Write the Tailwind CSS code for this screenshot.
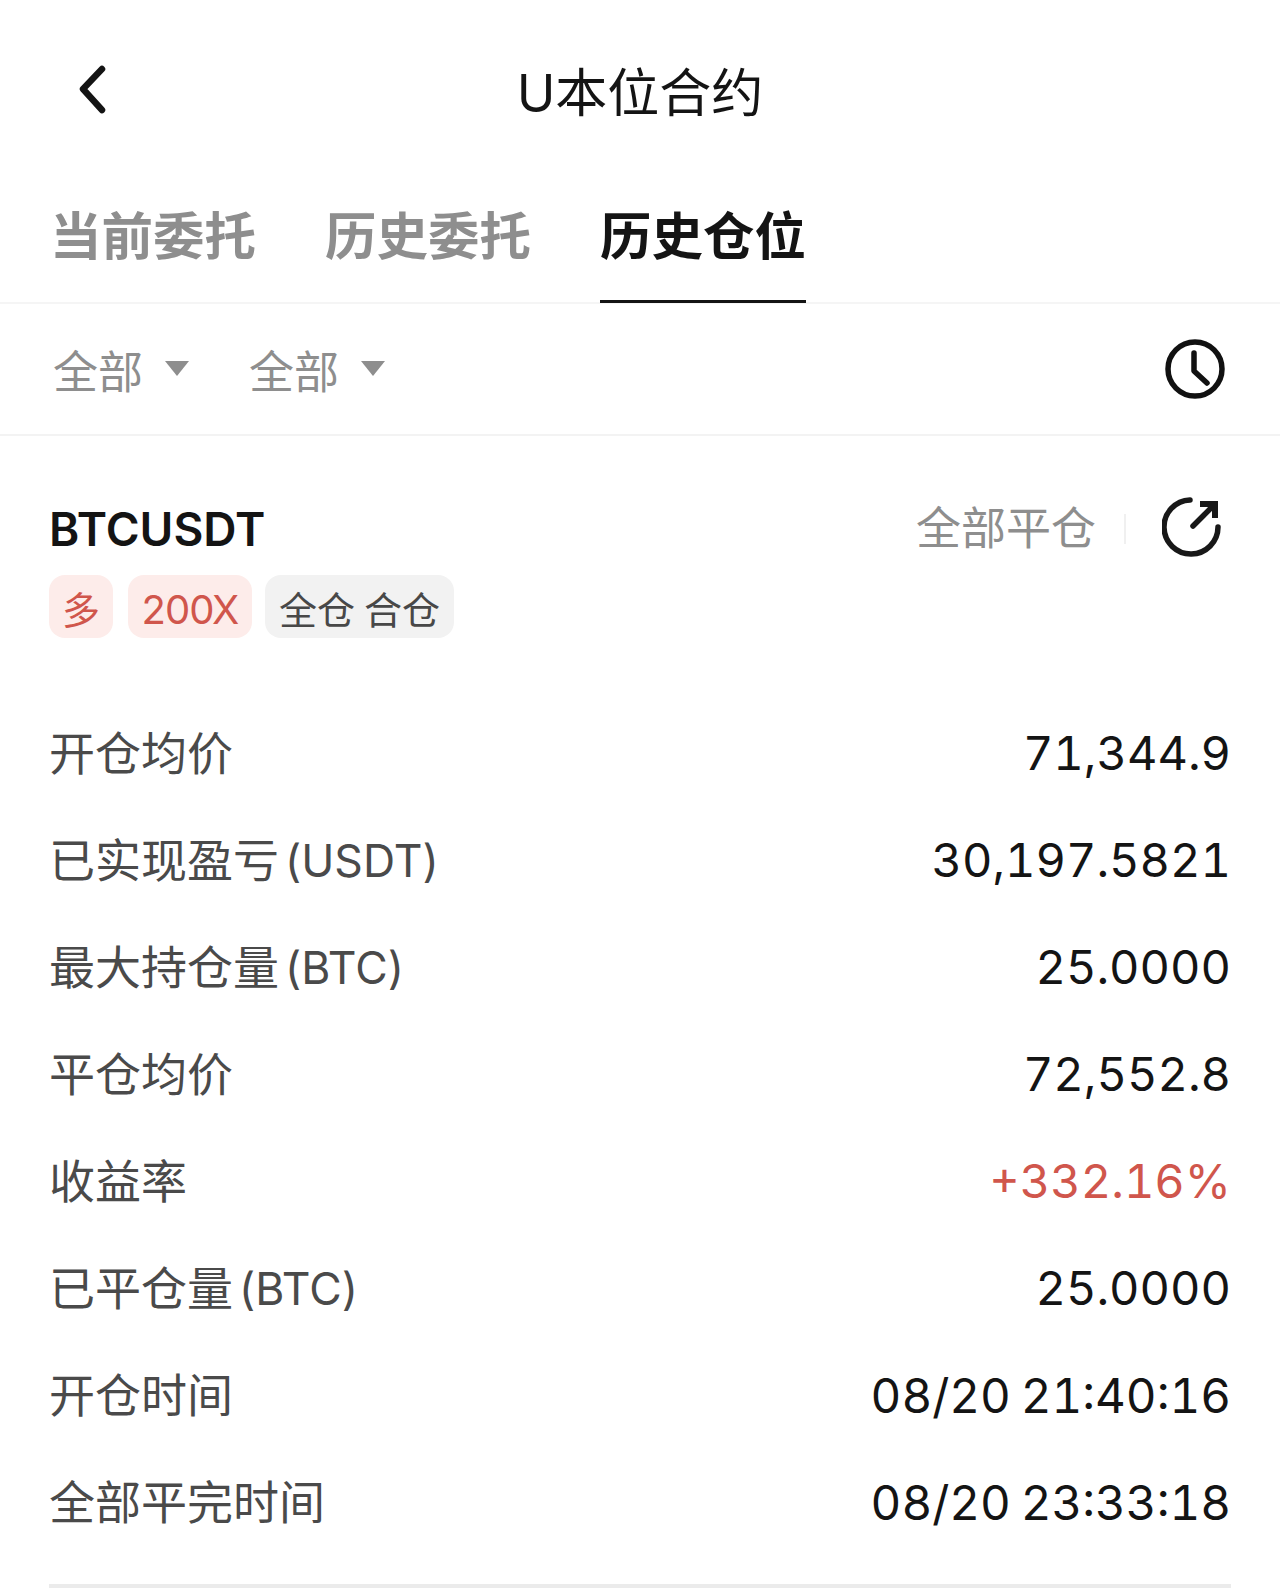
<!DOCTYPE html>
<html lang="zh-CN">
<head>
    <meta charset="UTF-8">
    <meta name="viewport" content="width=device-width, initial-scale=1.0">
    <title>U本位合约</title>
    <script src="https://cdn.jsdelivr.net/npm/@tailwindcss/browser@4"></script>
</head>
<body class="bg-white">
    <div class="w-[1280px] h-[1596px] overflow-hidden bg-white font-['Inter','Noto_Sans_CJK_SC',sans-serif] text-[#141414]">
        <!-- Header -->
        <div class="relative h-[188px] pt-[64px] flex justify-center">
            <svg class="absolute left-[74px] top-[60px]" width="36" height="56" viewBox="0 0 36 56" fill="none" stroke="#141414" stroke-width="6.5" stroke-linecap="round" stroke-linejoin="round"><path d="M28 9 L9 29 L28 50"/></svg>
            <div class="text-[52px] leading-[60px]">U本位合约</div>
        </div>

        <!-- Tabs -->
        <div class="h-[116px] flex gap-[69px] pl-[50px] border-b-2 border-[#f5f5f5] font-bold text-[51.5px] leading-[97px] text-[#8e8e8e]">
            <div>当前委托</div>
            <div>历史委托</div>
            <div class="h-[115px] border-b-[3px] border-[#141414] text-[#141414]">历史仓位</div>
        </div>

        <!-- Filters -->
        <div class="h-[132px] flex items-center pl-[53px] pr-[54px] border-b-2 border-[#f3f3f3] text-[45px] text-[#8e8e8e]">
            <span class="mt-[8px]">全部</span>
            <svg class="ml-[22px] mb-[2px]" width="24" height="15" viewBox="0 0 24 15" fill="#8e8e8e"><path d="M0 0H24L12 15Z"/></svg>
            <span class="ml-[60px] mt-[8px]">全部</span>
            <svg class="ml-[22px] mb-[2px]" width="24" height="15" viewBox="0 0 24 15" fill="#8e8e8e"><path d="M0 0H24L12 15Z"/></svg>
            <svg class="ml-auto mr-[1px]" width="60" height="60" viewBox="0 0 60 60" fill="none" stroke="#111" stroke-width="5.5" stroke-linecap="round" stroke-linejoin="round"><circle cx="30" cy="30" r="27"/><path d="M29 14V32L42 44"/></svg>
        </div>

        <!-- Position card -->
        <div class="px-[49px] pt-[54px]">
            <div class="flex items-center h-[78px]">
                <div class="font-semibold text-[46px]">BTCUSDT</div>
                <div class="ml-auto text-[45px] text-[#8e8e8e]">全部平仓</div>
                <div class="ml-[28px] w-[2px] h-[30px] bg-[#f0f0f0]"></div>
                <svg class="ml-[36px] mr-[9px] mb-[5px]" width="60" height="60" viewBox="0 0 60 60" fill="none" stroke="#181818" stroke-width="5.5" stroke-linecap="round" stroke-linejoin="round"><path d="M28 3A27 27 0 1 0 56 30"/><path d="M31 29L51 9"/><path d="M38 7H53V21" stroke-width="6" stroke-linecap="butt" stroke-linejoin="miter"/></svg>
            </div>
            <div class="flex gap-[15px] mt-[7px] text-[38px] leading-[70px]">
                <div class="w-[64px] h-[63px] rounded-[16px] bg-[#fdecea] text-[#d0564c] text-center">多</div>
                <div class="w-[124px] h-[63px] rounded-[16px] bg-[#fdecea] text-[#d0564c] text-center text-[40px] tracking-[-1px]">200X</div>
                <div class="w-[189px] h-[63px] rounded-[16px] bg-[#f2f2f2] text-[#484848] text-center -ml-[2px] flex justify-center gap-[9px]"><span>全仓</span><span>合仓</span></div>
            </div>

            <!-- Rows -->
            <div class="mt-[62px] text-[46px] text-[#4a4a4a]">
                <div class="h-[107px] flex items-center justify-between"><span>开仓均价</span><span class="text-[47px] tabular-nums text-[#141414]">71,344.9</span></div>
                <div class="h-[107px] flex items-center justify-between"><span>已实现盈亏<span class="ml-[6px] text-[44.5px]">(USDT)</span></span><span class="text-[47px] tabular-nums text-[#141414]">30,197.5821</span></div>
                <div class="h-[107px] flex items-center justify-between"><span>最大持仓量<span class="ml-[6px] text-[44.5px]">(BTC)</span></span><span class="text-[47px] tabular-nums text-[#141414]">25.0000</span></div>
                <div class="h-[107px] flex items-center justify-between"><span>平仓均价</span><span class="text-[47px] tabular-nums text-[#141414]">72,552.8</span></div>
                <div class="h-[107px] flex items-center justify-between"><span>收益率</span><span class="text-[47px] tabular-nums text-[#d0564c]">+332.16%</span></div>
                <div class="h-[107px] flex items-center justify-between"><span>已平仓量<span class="ml-[6px] text-[44.5px]">(BTC)</span></span><span class="text-[47px] tabular-nums text-[#141414]">25.0000</span></div>
                <div class="h-[107px] flex items-center justify-between"><span>开仓时间</span><span class="text-[47.5px] tabular-nums [word-spacing:-3px] text-[#141414]">08/20 21:40:16</span></div>
                <div class="h-[107px] flex items-center justify-between"><span>全部平完时间</span><span class="text-[47.5px] tabular-nums [word-spacing:-3px] text-[#141414]">08/20 23:33:18</span></div>
            </div>
            <div class="mt-[28px] h-[4px] bg-[#ebebeb]"></div>
        </div>
    </div>
</body>
</html>
